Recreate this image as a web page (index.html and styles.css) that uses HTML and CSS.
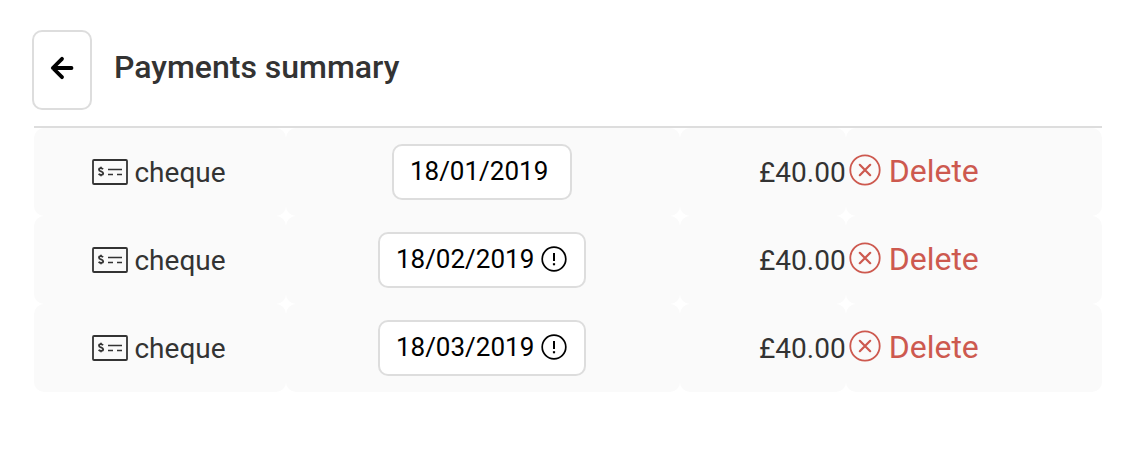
FILE: index.html
```
<!DOCTYPE html>
<html lang="en">
<head>
    <meta charset="utf-8">
    <meta name="viewport" content="width=device-width, initial-scale=1">
    <title>Payments summary</title>
    <link rel="stylesheet" href="styles.css">
</head>
<body>
    <svg class="sprite" aria-hidden="true">
        <symbol id="icon-cheque" viewBox="0 0 36 26">
            <rect x="1" y="1" width="34" height="24" rx="1" stroke-width="1.8"/>
            <path d="M11 10.3C10.5 9.5 9.8 9.2 8.9 9.2C7.7 9.2 7 9.8 7 10.7C7 12.8 11.2 11.9 11.2 14.3C11.2 15.3 10.3 15.9 9.1 15.9C8 15.9 7.2 15.5 6.7 14.7M9 7.8V9.2M9 15.9V17.2" stroke-width="1.8"/>
            <path d="M16 10.5H30M16 15.5H21M25 15.5H30" stroke-width="1.6"/>
        </symbol>
        <symbol id="icon-alert" viewBox="0 0 26 26">
            <circle cx="13" cy="13" r="11.8" stroke-width="1.7"/>
            <path d="M13 7V15" stroke-width="2"/>
            <path d="M13 17.2V19.3" stroke-width="2.2"/>
        </symbol>
        <symbol id="icon-delete" viewBox="0 0 32 32">
            <circle cx="16" cy="16" r="14.7" stroke-width="1.8"/>
            <path d="M10.8 10.8L21.2 21.2M21.2 10.8L10.8 21.2" stroke-width="2.2" stroke-linecap="round"/>
        </symbol>
    </svg>

    <header class="header">
        <button type="button" class="back" aria-label="Back">
            <svg class="back-icon" viewBox="0 0 24 24">
                <path d="M21.5 12H3M12 2.8L2.8 12L12 21.2" stroke-width="3.8" stroke-linecap="round" stroke-linejoin="round"/>
            </svg>
        </button>
        <h1 class="title">Payments summary</h1>
    </header>

    <table class="payments">
        <colgroup>
            <col class="col-method">
            <col class="col-date">
            <col class="col-amount">
            <col class="col-action">
        </colgroup>
        <tbody>
            <tr>
                <td class="method"><span class="method-label"><svg class="cheque-icon"><use href="#icon-cheque"/></svg>cheque</span></td>
                <td class="date"><button type="button" class="date-button"><span class="date-text">18/01/2019</span></button></td>
                <td class="amount">£40.00</td>
                <td class="action"><button type="button" class="delete"><svg class="delete-icon"><use href="#icon-delete"/></svg>Delete</button></td>
            </tr>
            <tr>
                <td class="method"><span class="method-label"><svg class="cheque-icon"><use href="#icon-cheque"/></svg>cheque</span></td>
                <td class="date"><button type="button" class="date-button"><span class="date-text">18/02/2019</span><svg class="alert-icon"><use href="#icon-alert"/></svg></button></td>
                <td class="amount">£40.00</td>
                <td class="action"><button type="button" class="delete"><svg class="delete-icon"><use href="#icon-delete"/></svg>Delete</button></td>
            </tr>
            <tr>
                <td class="method"><span class="method-label"><svg class="cheque-icon"><use href="#icon-cheque"/></svg>cheque</span></td>
                <td class="date"><button type="button" class="date-button"><span class="date-text">18/03/2019</span><svg class="alert-icon"><use href="#icon-alert"/></svg></button></td>
                <td class="amount">£40.00</td>
                <td class="action"><button type="button" class="delete"><svg class="delete-icon"><use href="#icon-delete"/></svg>Delete</button></td>
            </tr>
        </tbody>
    </table>
</body>
</html>
```

FILE: styles.css
```
body {
    margin: 0;
    padding: 30px 30px 30px 34px;
    background: #fff;
    color: #333;
    font-family: Roboto, Arial, sans-serif;
}

button {
    font-family: inherit;
    cursor: pointer;
}

svg {
    flex: none;
    fill: none;
    stroke: currentColor;
}

.sprite {
    display: none;
}

.header {
    display: flex;
    align-items: center;
    gap: 22px;
    padding-bottom: 16px;
    margin-left: -2px;
}

.back {
    display: flex;
    align-items: center;
    justify-content: center;
    box-sizing: border-box;
    width: 60px;
    height: 80px;
    padding: 0 0 4px;
    border: 2px solid #ddd;
    border-radius: 10px;
    background: #fff;
    color: #000;
}

.back-icon {
    width: 24px;
    height: 24px;
}

.title {
    margin: 0;
    padding-bottom: 6px;
    font-size: 32px;
    line-height: 40px;
    font-weight: 500;
}

.payments {
    width: 100%;
    table-layout: fixed;
    border-collapse: separate;
    border-spacing: 0;
    border-top: 2px solid #ddd;
}

.col-method { width: 23.6%; }
.col-date { width: 36.9%; }
.col-amount { width: 15.5%; }
.col-action { width: 24%; }

.payments td {
    padding: 16px 0;
    border-radius: 10px;
    background: #fafafa;
    font-size: 28px;
    line-height: 32px;
    vertical-align: middle;
}

.payments .method {
    padding: 18px 2px 16px 0;
}

.payments .date {
    padding-right: 2px;
}

.payments .amount {
    padding: 18px 0 16px;
    text-align: right;
}

.method-label {
    display: flex;
    align-items: center;
    justify-content: center;
    gap: 6px;
}

.cheque-icon {
    width: 36px;
    height: 26px;
    margin-bottom: 2px;
}

.date-button {
    display: flex;
    align-items: center;
    box-sizing: border-box;
    height: 56px;
    margin: 0 auto;
    padding: 0 16px 2px;
    border: 2px solid #ddd;
    border-radius: 10px;
    background: #fff;
    color: #000;
    font-size: 26px;
    line-height: 32px;
}

.date-text {
    margin-right: 6px;
}

.alert-icon {
    width: 26px;
    height: 26px;
    margin: 0 1px;
}

.delete {
    display: flex;
    align-items: center;
    gap: 8px;
    padding: 0 3px 2px;
    border: 0;
    background: none;
    color: #cd594f;
    font-size: 32px;
    line-height: 40px;
}

.delete-icon {
    width: 32px;
    height: 32px;
    margin-bottom: 2px;
}
```
